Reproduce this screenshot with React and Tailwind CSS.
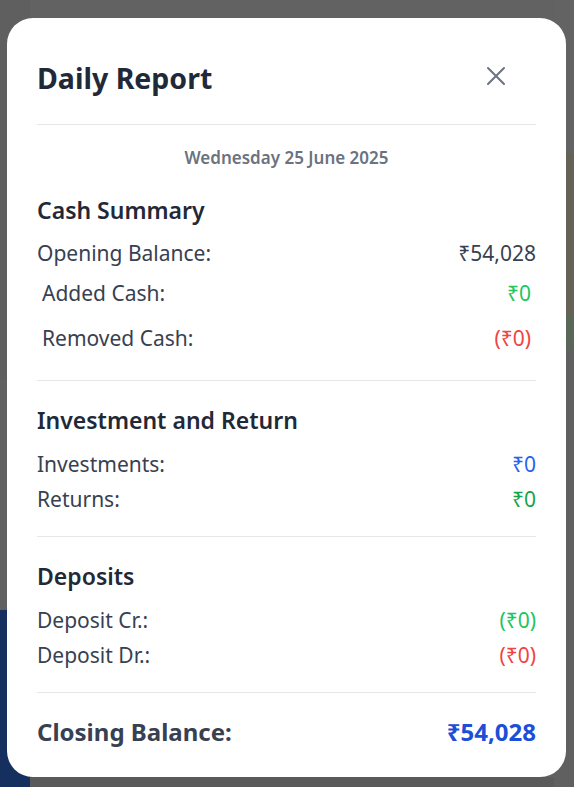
import { useState } from "react";

function Row({ label, value, color, className = "" }) {
  return (
    <div className={`flex items-center justify-between text-[21px] leading-[28px] ${className}`}>
      <span className="text-[#374151]">{label}</span>
      <span className={color}>{value}</span>
    </div>
  );
}

function CloseIcon() {
  return (
    <svg width="20" height="20" viewBox="0 0 20 20" fill="none" stroke="#6b7280" strokeWidth="2" strokeLinecap="round">
      <path d="M2 2 L18 18 M18 2 L2 18" />
    </svg>
  );
}

export default function App() {
  const [open] = useState(true);

  return (
    <div className="relative w-[574px] h-[787px] overflow-hidden bg-[#626262]" style={{ fontFamily: "'Noto Sans', 'Open Sans', sans-serif" }}>
      {/* dimmed page behind the modal */}
      <div className="flex h-full">
        <div className="flex flex-col w-[30px]">
          <div className="h-[380px] bg-[#5f5f5f]" />
          <div className="h-[230px] bg-[#616161]" />
          <div className="flex-1 bg-[#15305f]" />
        </div>
        <div className="flex-1 flex flex-col">
          <div className="h-[777px]" />
          <div className="flex-1 bg-[#5a5a5a]" />
        </div>
        <div className="flex flex-col w-[20px]">
          <div className="h-[153px] bg-[#636363]" />
          <div className="h-[162px] bg-[#666157]" />
          <div className="h-[35px] bg-[#5a6658]" />
          <div className="flex-1 bg-[#606060]" />
        </div>
      </div>

      {open && (
        <div className="absolute left-[7px] top-[18px] w-[559px] h-[759px] bg-white rounded-[26px] px-[30px] pt-[42px]">
          <div className="flex items-center justify-between pb-[28px] border-b border-[#e5e7eb]">
            <h2 className="text-[28.5px] leading-[36px] font-bold text-[#1f2937]">Daily Report</h2>
            <button className="mr-[30px] mt-[-4px]">
              <CloseIcon />
            </button>
          </div>

          <p className="mt-[23px] text-center text-[17px] leading-[20px] font-semibold text-[#6b7280]">Wednesday 25 June 2025</p>

          <div className="pb-[28px] border-b border-[#e5e7eb]">
            <h3 className="mt-[27px] text-[23px] leading-[30px] font-semibold text-[#1f2937]">Cash Summary</h3>
            <Row className="mt-[14px]" label="Opening Balance:" value="₹54,028" color="text-[#374151]" />
            <Row className="mt-[12px] px-[5px]" label="Added Cash:" value="₹0" color="text-[#22c55e]" />
            <Row className="mt-[17px] px-[5px]" label="Removed Cash:" value="(₹0)" color="text-[#ef4444]" />
          </div>

          <div className="pb-[23px] border-b border-[#e5e7eb]">
            <h3 className="mt-[24px] text-[23px] leading-[30px] font-semibold text-[#1f2937]">Investment and Return</h3>
            <Row className="mt-[15px]" label="Investments:" value="₹0" color="text-[#2563eb]" />
            <Row className="mt-[7px]" label="Returns:" value="₹0" color="text-[#16a34a]" />
          </div>

          <div className="pb-[23px] border-b border-[#e5e7eb]">
            <h3 className="mt-[24px] text-[23px] leading-[30px] font-semibold text-[#1f2937]">Deposits</h3>
            <Row className="mt-[15px]" label="Deposit Cr.:" value="(₹0)" color="text-[#22c55e]" />
            <Row className="mt-[7px]" label="Deposit Dr.:" value="(₹0)" color="text-[#ef4444]" />
          </div>

          <div className="mt-[24px] flex items-center justify-between text-[24px] leading-[30px] font-bold">
            <span className="text-[#374151]">Closing Balance:</span>
            <span className="text-[#1d4ed8]">₹54,028</span>
          </div>
        </div>
      )}
    </div>
  );
}
